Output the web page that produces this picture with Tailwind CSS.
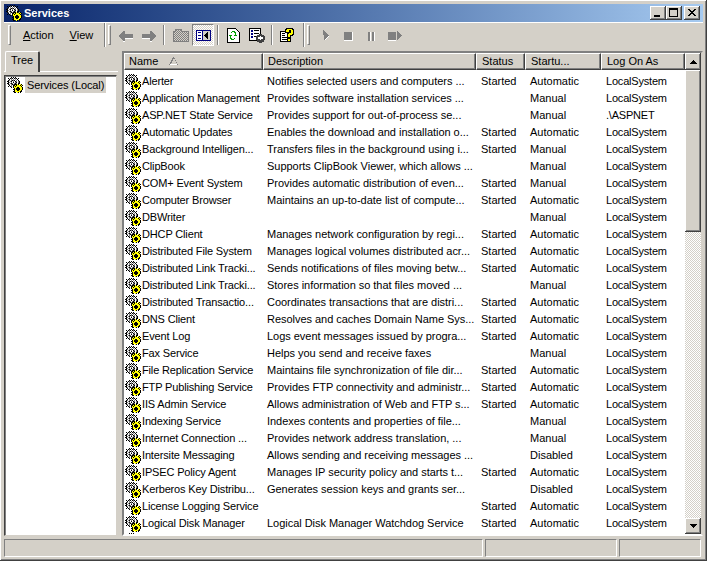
<!doctype html>
<html>
<head>
  <meta charset="UTF-8">
  <title>Services</title>
  <script src="https://cdn.jsdelivr.net/npm/@tailwindcss/browser@4"></script>
</head>
<body class="bg-[#d4d0c8]">
  <svg width="0" height="0" class="absolute">
    <defs>
      <pattern id="dither" width="2" height="2" patternUnits="userSpaceOnUse"><rect width="2" height="2" fill="#d4d0c8"/><rect width="1" height="1" fill="#808080"/><rect x="1" y="1" width="1" height="1" fill="#808080"/></pattern>
    </defs>
    <symbol id="gears" viewBox="0 0 16 16" shape-rendering="crispEdges"><g id="gearpx"></g></symbol>
  </svg>

  <div class="flex flex-col w-[707px] h-[561px] p-[4px] bg-[#d4d0c8] overflow-hidden text-[11px] leading-[13px] text-black font-['Liberation_Sans',sans-serif] shadow-[inset_-1px_-1px_0_#404040,inset_1px_1px_0_#fff,inset_-2px_-2px_0_#808080]">

    <!-- title bar -->
    <div class="flex items-center h-[18px] shrink-0 pl-[2px] pr-[3px] bg-gradient-to-r from-[#0a246a] to-[#a6caf0]">
      <svg class="w-[16px] h-[16px]"><use href="#gears"/></svg>
      <span class="ml-[2px] font-bold text-white">Services</span>
      <div class="ml-auto flex">
        <div class="relative w-[16px] h-[14px] bg-[#d4d0c8] shadow-[inset_-1px_-1px_0_#404040,inset_1px_1px_0_#fff,inset_-2px_-2px_0_#808080]"><div class="absolute left-[4px] top-[9px] w-[6px] h-[2px] bg-black"></div></div>
        <div class="relative w-[16px] h-[14px] bg-[#d4d0c8] shadow-[inset_-1px_-1px_0_#404040,inset_1px_1px_0_#fff,inset_-2px_-2px_0_#808080]"><div class="absolute left-[3px] top-[2px] w-[9px] h-[9px] border border-t-2 border-black"></div></div>
        <div class="ml-[2px] w-[16px] h-[14px] bg-[#d4d0c8] shadow-[inset_-1px_-1px_0_#404040,inset_1px_1px_0_#fff,inset_-2px_-2px_0_#808080]">
          <svg width="16" height="14" shape-rendering="crispEdges"><path d="M4 3h2v1h1v1h2v-1h1v-1h2v1h-1v1h-1v1h-1v1h1v1h1v1h1v1h-2v-1h-1v-1h-2v1h-1v1h-2v-1h1v-1h1v-1h1v-1h-1v-1h-1v-1h-1z" fill="#000"/></svg>
        </div>
      </div>
    </div>

    <!-- rebar -->
    <div class="flex items-center h-[27px] shrink-0 pb-[2px] border-t border-t-[#fff] shadow-[inset_0_-2px_0_#d4d0c8,inset_0_-2px_0_#808080]">
      <div class="flex items-center h-[24px] w-[100px] shrink-0">
        <div class="ml-[4px] w-[3px] h-[20px] border border-t-white border-l-white border-r-[#808080] border-b-[#808080]"></div>
        <span class="ml-[12px] mt-[1px]"><span class="underline">A</span>ction</span>
        <span class="ml-[16px] mt-[1px]"><span class="underline">V</span>iew</span>
      </div>
      <div class="w-[2px] h-[24px] border-l border-l-[#808080] border-r border-r-white"></div>
      <div class="ml-[2px] w-[3px] h-[20px] border border-t-white border-l-white border-r-[#808080] border-b-[#808080]"></div>

      <svg class="ml-[8px] mt-[3px] shrink-0" width="14" height="11" shape-rendering="crispEdges"><path d="M0 4h1v-1h1v-1h1v-1h1v-1h2v3h8v4h-8v3h-2v-1h-1v-1h-1v-1h-1v-1h-1z" fill="#808080"/><path d="M6 7h8v1h-8zM4 10h2v1h-2z" fill="#fff"/></svg>
      <svg class="ml-[9px] mt-[3px] shrink-0" width="14" height="11" shape-rendering="crispEdges"><g transform="translate(14 0) scale(-1 1)"><path d="M0 4h1v-1h1v-1h1v-1h1v-1h2v3h8v4h-8v3h-2v-1h-1v-1h-1v-1h-1v-1h-1z" fill="#808080"/><path d="M6 7h8v1h-8zM4 10h2v1h-2z" fill="#fff"/></g></svg>
      <div class="ml-[7px] w-[2px] h-[20px] border-l border-l-[#808080] border-r border-r-white"></div>
      <svg class="ml-[8px] mt-[1px] shrink-0" width="16" height="13" shape-rendering="crispEdges"><path d="M.5 12.500v-10h2v-2h6v2h7v10z" fill="url(#dither)" stroke="#808080"/><path d="M1 12h14v1h-14z" fill="#808080"/></svg>
      <div class="ml-[3px] flex items-center justify-center w-[22px] h-[22px] shrink-0 bg-[repeating-conic-gradient(#fff_0_25%,#d4d0c8_0_50%)] bg-[length:2px_2px] border border-t-[#808080] border-l-[#808080] border-r-white border-b-white">
        <svg width="15" height="11" shape-rendering="crispEdges"><path d="M0 0h15v11h-15z" fill="#000080"/><path d="M1 1h5v9h-5z" fill="#fff"/><path d="M7 1h7v9h-7z" fill="#d4d0c8"/><path d="M2 2h3v1h-3zM2 5h3v1h-3zM2 8h3v1h-3z" fill="#000080"/><path d="M11 2h1v7h-1v-1h-1v-1h-1v-1h-1v-1h1v-1h1v-1h1z" fill="#000"/></svg>
      </div>
      <div class="ml-[3px] w-[2px] h-[20px] border-l border-l-[#808080] border-r border-r-white"></div>

      <svg class="ml-[8px] shrink-0" width="13" height="15" shape-rendering="crispEdges"><path d="M.5.5h8l4 4v10h-12z" fill="#fff" stroke="#000"/><path d="M5 3h3v1h1v3h1v1h-3v-1h1v-2h-1v-1h-2v1h-1v-1h1z" fill="#00a000"/><path d="M2 7h3v1h-1v2h1v1h2v1h-3v-1h-1v-3h-1z" fill="#00a000"/><path d="M7 10h1v1h-1z" fill="#008000"/></svg>
      <svg class="ml-[9px] mt-[1px] shrink-0" width="16" height="15" shape-rendering="crispEdges"><path d="M.5.5h11v12h-11z" fill="#fff" stroke="#000"/><path d="M2 2h2v2h-2zM2 5h2v2h-2zM2 8h2v2h-2z" fill="#000080"/><path d="M5 2h5v1h-5zM5 5h5v1h-5zM5 8h2v1h-2z" fill="#000"/><path d="M10 6h3v1h2v1h1v4h-1v2h-2v1h-3v-1h-2v-2h-1v-4h1v-1h2z" fill="#404040"/><path d="M11 8h1v1h2v2h-2v1h-1v-1h-2v-2h2z" fill="#fff"/></svg>
      <div class="ml-[6px] w-[2px] h-[20px] border-l border-l-[#808080] border-r border-r-white"></div>
      <svg class="ml-[7px] shrink-0" width="15" height="14" shape-rendering="crispEdges"><path d="M.5 3.500h9v10h-9z" fill="#fff" stroke="#000"/><path d="M2 5h3v1h-3zM2 7h3v1h-3zM2 9h5v1h-5zM2 11h5v1h-5z" fill="#000"/><path d="M7 1h5v1h1v4h-1v1h-2v2h-2v-3h1v-1h2v-3h-2v2h-3v-2h1z" fill="#000" stroke="#000" stroke-width="2"/><path d="M7 1h5v1h1v4h-1v1h-2v2h-2v-3h1v-1h2v-3h-2v2h-3v-2h1z" fill="#ff0"/><path d="M7 10h4v4h-4z" fill="#000"/><path d="M8 11h2v2h-2z" fill="#ff0"/></svg>
      <div class="ml-[8px] w-[2px] h-[24px] border-l border-l-[#808080] border-r border-r-white"></div>
      <div class="ml-[2px] w-[3px] h-[20px] border border-t-white border-l-white border-r-[#808080] border-b-[#808080]"></div>

      <svg class="ml-[13px] mt-[1px] shrink-0" width="7" height="11" shape-rendering="crispEdges"><path d="M0 0h1v1h1v1h1v1h1v1h1v1h1v1h-1v1h-1v1h-1v1h-1v1h-1z" fill="#808080"/><path d="M5 6h1v1h-1zM4 7h1v1h-1zM3 8h1v1h-1zM2 9h1v1h-1z" fill="#fff"/></svg>
      <div class="ml-[14px] mt-[2px] w-[9px] h-[9px] bg-[#808080] border-r border-b border-r-white border-b-white"></div>
      <div class="ml-[15px] mt-[2px] flex gap-[1px]"><div class="w-[3px] h-[9px] bg-[#808080] border-r border-r-white"></div><div class="w-[3px] h-[9px] bg-[#808080] border-r border-r-white"></div></div>
      <svg class="ml-[13px] mt-[1px] shrink-0" width="14" height="10" shape-rendering="crispEdges"><path d="M0 1h8v8h-8z" fill="#808080"/><path d="M9 0h1v1h1v1h1v1h1v1h1v1h-1v1h-1v1h-1v1h-1v1h-1z" fill="#808080"/><path d="M0 9h8v1h-8z" fill="#fff"/></svg>
    </div>

    <!-- panes -->
    <div class="flex flex-1 min-h-0">
      <!-- tree side -->
      <div class="relative flex flex-col w-[114px] shrink-0 pt-[2px]">
        <div class="relative z-10 flex items-center w-[35px] h-[21px] ml-[1px] pl-[5px] pb-[4px] bg-[#d4d0c8] rounded-t-[2px] border-t border-t-white border-l border-l-white border-r-2 border-r-[#404040]">Tree</div>
        <div class="flex-1 -mt-[1px] pt-[3px] border-t border-t-white">
          <div class="h-full w-[113px] pt-[1px] pl-[2px] bg-white border border-t-[#404040] border-l-[#404040] border-r-[#d4d0c8] border-b-[#d4d0c8] shadow-[inset_1px_1px_0_#808080]">
            <div class="flex items-center h-[16px]">
              <svg class="w-[16px] h-[16px] shrink-0"><use href="#gears"/></svg>
              <span class="ml-[2px] px-[2px] h-[16px] leading-[16px] bg-[#d4d0c8] whitespace-nowrap tracking-[-0.1px]">Services (Local)</span>
            </div>
          </div>
        </div>
      </div>

      <!-- list side -->
      <div class="flex w-[581px] ml-[4px] mt-[2px] border-2 border-t-[#808080] border-l-[#808080] border-r-[#d4d0c8] border-b-white shadow-[inset_1px_1px_0_#404040]">
        <div class="flex flex-col w-[561px] shrink-0">
          <div class="flex h-[17px] shrink-0 bg-[#d4d0c8]">
            <div class="relative flex items-center w-[139px] pl-[4px] border border-t-white border-l-white border-r-[#404040] border-b-[#404040] shadow-[inset_-1px_-1px_0_#808080]">Name
              <svg class="absolute left-[44px] top-[3px]" width="9" height="9" shape-rendering="crispEdges"><path d="M4 0h1v1h1v2h1v2h1v2h1v1h-9v-1h1v-2h1v-2h1v-2h1z" fill="#808080"/><path d="M5 2h1v2h1v2h1v1h-6v-1h1v-2h1v-2h1z" fill="#d4d0c8"/><path d="M1 7h7v1h-7z" fill="#fff"/></svg>
            </div>
            <div class="flex items-center w-[213px] pl-[4px] border border-t-white border-l-white border-r-[#404040] border-b-[#404040] shadow-[inset_-1px_-1px_0_#808080]">Description</div>
            <div class="flex items-center w-[49px] pl-[5px] border border-t-white border-l-white border-r-[#404040] border-b-[#404040] shadow-[inset_-1px_-1px_0_#808080]">Status</div>
            <div class="flex items-center w-[76px] pl-[5px] border border-t-white border-l-white border-r-[#404040] border-b-[#404040] shadow-[inset_-1px_-1px_0_#808080]">Startu...</div>
            <div class="flex items-center w-[84px] pl-[5px] border border-t-white border-l-white border-r-[#404040] border-b-[#404040] shadow-[inset_-1px_-1px_0_#808080]">Log On As</div>
          </div>
          <div id="rows" class="flex-1 min-h-0 overflow-hidden bg-white pt-[3px]"></div>
        </div>

        <!-- scrollbar -->
        <div class="flex flex-col w-[16px] shrink-0 bg-[repeating-conic-gradient(#fff_0_25%,#d4d0c8_0_50%)] bg-[length:2px_2px]">
          <div class="flex items-center justify-center h-[17px] shrink-0 bg-[#d4d0c8] shadow-[inset_-1px_-1px_0_#404040,inset_1px_1px_0_#fff,inset_-2px_-2px_0_#808080]">
            <svg width="7" height="4" shape-rendering="crispEdges"><path d="M3 0h1v1h1v1h1v1h1v1h-7v-1h1v-1h1v-1h1z"/></svg>
          </div>
          <div class="h-[162px] shrink-0 bg-[#d4d0c8] shadow-[inset_-1px_-1px_0_#404040,inset_1px_1px_0_#fff,inset_-2px_-2px_0_#808080]"></div>
          <div class="flex items-center justify-center h-[16px] mt-auto shrink-0 bg-[#d4d0c8] shadow-[inset_-1px_-1px_0_#404040,inset_1px_1px_0_#fff,inset_-2px_-2px_0_#808080]">
            <svg width="7" height="4" shape-rendering="crispEdges"><path d="M0 0h7v1h-1v1h-1v1h-1v1h-1v-1h-1v-1h-1v-1h-1z"/></svg>
          </div>
        </div>
      </div>
    </div>

    <!-- status bar -->
    <div class="flex h-[21px] shrink-0 pt-[3px] gap-[2px]">
      <div class="w-[479px] border border-t-[#808080] border-l-[#808080] border-r-white border-b-white"></div>
      <div class="w-[132px] border border-t-[#808080] border-l-[#808080] border-r-white border-b-white"></div>
      <div class="flex-1 mr-[2px] border border-t-[#808080] border-l-[#808080] border-r-white border-b-white"></div>
    </div>
  </div>

  <script>
    // gear icon, drawn pixel by pixel
    let gearmap = [
      "....k.k.k.......",
      ".k.kgkwkgk.k....",
      "..kwgwgwgwk.....",
      ".kgwgkgkwgwk....",
      "kkwgkwgwkgwgk...",
      ".kgwgwkwgkwgk...",
      "kkwgkgwgkgwkk...",
      ".kgwgkgkkkyk.yk.",
      "..kwgwkkykyyykyk",
      ".k.kgwkykyyyyyk.",
      "....k.kyyykkyyyk",
      ".......kykkkkyyk",
      "......kkykkkkyyk",
      ".......kyykkyyk.",
      "......kkyyyyykk.",
      ".......kk.yk.k.."
    ];
    let gearcolors = {k:'#000000', w:'#ffffff', g:'#808080', y:'#ffff00'};
    let gearsvg = '';
    gearmap.forEach((row, y) => {
      row.split('').forEach((c, x) => {
        if(gearcolors[c]){gearsvg += `<rect x="${x}" y="${y}" width="1" height="1" fill="${gearcolors[c]}"/>`;}
      });
    });
    document.getElementById('gearpx').innerHTML = gearsvg;

    let services = [
      ["Alerter","Notifies selected users and computers ...","Started","Automatic","LocalSystem"],
      ["Application Management","Provides software installation services ...","","Manual","LocalSystem"],
      ["ASP.NET State Service","Provides support for out-of-process se...","","Manual",".\\ASPNET"],
      ["Automatic Updates","Enables the download and installation o...","Started","Automatic","LocalSystem"],
      ["Background Intelligen...","Transfers files in the background using i...","Started","Manual","LocalSystem"],
      ["ClipBook","Supports ClipBook Viewer, which allows ...","","Manual","LocalSystem"],
      ["COM+ Event System","Provides automatic distribution of even...","Started","Manual","LocalSystem"],
      ["Computer Browser","Maintains an up-to-date list of compute...","Started","Automatic","LocalSystem"],
      ["DBWriter","","","Manual","LocalSystem"],
      ["DHCP Client","Manages network configuration by regi...","Started","Automatic","LocalSystem"],
      ["Distributed File System","Manages logical volumes distributed acr...","Started","Automatic","LocalSystem"],
      ["Distributed Link Tracki...","Sends notifications of files moving betw...","Started","Automatic","LocalSystem"],
      ["Distributed Link Tracki...","Stores information so that files moved ...","","Manual","LocalSystem"],
      ["Distributed Transactio...","Coordinates transactions that are distri...","Started","Automatic","LocalSystem"],
      ["DNS Client","Resolves and caches Domain Name Sys...","Started","Automatic","LocalSystem"],
      ["Event Log","Logs event messages issued by progra...","Started","Automatic","LocalSystem"],
      ["Fax Service","Helps you send and receive faxes","","Manual","LocalSystem"],
      ["File Replication Service","Maintains file synchronization of file dir...","Started","Automatic","LocalSystem"],
      ["FTP Publishing Service","Provides FTP connectivity and administr...","Started","Automatic","LocalSystem"],
      ["IIS Admin Service","Allows administration of Web and FTP s...","Started","Automatic","LocalSystem"],
      ["Indexing Service","Indexes contents and properties of file...","","Manual","LocalSystem"],
      ["Internet Connection ...","Provides network address translation, ...","","Manual","LocalSystem"],
      ["Intersite Messaging","Allows sending and receiving messages ...","","Disabled","LocalSystem"],
      ["IPSEC Policy Agent","Manages IP security policy and starts t...","Started","Automatic","LocalSystem"],
      ["Kerberos Key Distribu...","Generates session keys and grants ser...","","Disabled","LocalSystem"],
      ["License Logging Service","","Started","Automatic","LocalSystem"],
      ["Logical Disk Manager","Logical Disk Manager Watchdog Service","Started","Automatic","LocalSystem"],
      ["","","","",""]
    ];
    let rows = document.getElementById('rows');
    services.forEach(s => {
      let row = document.createElement('div');
      row.className = 'flex items-center h-[17px] whitespace-nowrap';
      row.innerHTML =
        `<div class="flex items-center w-[139px] pl-[1px] shrink-0"><svg class="w-[16px] h-[16px] shrink-0"><use href="#gears"/></svg><span class="ml-[1px] tracking-[-0.15px]">${s[0]}</span></div>` +
        `<div class="w-[213px] pl-[4px] shrink-0 tracking-[-0.03px]">${s[1]}</div>` +
        `<div class="w-[49px] pl-[5px] shrink-0">${s[2]}</div>` +
        `<div class="w-[76px] pl-[5px] shrink-0">${s[3]}</div>` +
        `<div class="w-[84px] pl-[5px] shrink-0 tracking-[-0.2px]">${s[4]}</div>`;
      rows.appendChild(row);
    });
  </script>
</body>
</html>
